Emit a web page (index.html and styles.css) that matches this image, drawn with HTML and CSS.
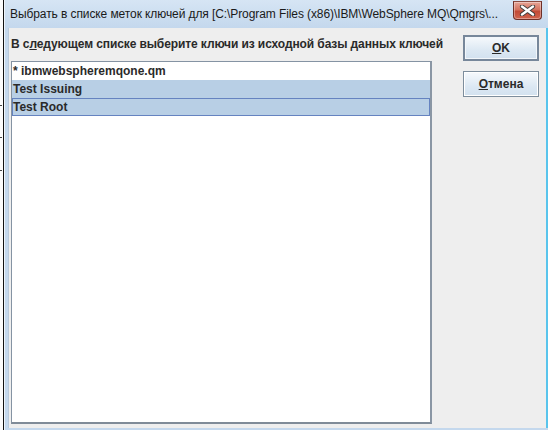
FILE: index.html
```html
<!DOCTYPE html>
<html>
<head>
<meta charset="utf-8">
<link rel="stylesheet" href="styles.css">
</head>
<body>
<div class="backdrop">
  <span class="mark m1"></span>
  <span class="mark m2"></span>
  <span class="mark m3"></span>
</div>
<div class="window">
  <div class="titlebar">
    <span class="title">Выбрать в списке меток ключей для [C:\Program Files (x86)\IBM\WebSphere MQ\Qmgrs\...</span>
    <div class="close">
      <svg width="17" height="11" viewBox="0 0 17 11">
        <path d="M3 1.5 L14 9.5 M14 1.5 L3 9.5" stroke="#3b3b3b" stroke-width="4.2" stroke-linecap="round"/>
        <path d="M3 1.5 L14 9.5 M14 1.5 L3 9.5" stroke="#ffffff" stroke-width="2.4" stroke-linecap="round"/>
      </svg>
    </div>
  </div>
  <div class="client">
    <div class="main">
      <div class="label">В с<u>л</u>едующем списке выберите ключи из исходной базы данных ключей</div>
      <div class="list">
        <div class="row">* ibmwebspheremqone.qm</div>
        <div class="row sel">Test Issuing</div>
        <div class="row sel focus">Test Root</div>
      </div>
    </div>
    <div class="buttons">
      <div class="btn default"><u>O</u>K</div>
      <div class="btn"><u>О</u>тмена</div>
    </div>
  </div>
</div>
</body>
</html>
```
FILE: styles.css
```css
html, body {
  margin: 0;
  padding: 0;
  width: 548px;
  height: 430px;
  overflow: hidden;
}
body {
  display: flex;
  font-family: "Liberation Sans", Arial, sans-serif;
  background: #ffffff;
}
.backdrop {
  position: relative;
  width: 3px;
  height: 430px;
  background: #fbfbfb;
  border-right: 1px solid #111;
  flex: none;
}
.mark {
  position: absolute;
  left: 0;
  width: 2px;
  height: 1px;
  background: #444;
}
.m1 { top: 105px; }
.m2 { top: 137px; }
.m3 { top: 170px; }
.window {
  flex: 1;
  display: flex;
  flex-direction: column;
  background: #c4d8ed;
  border-left: 1px solid #eef4fa;
  padding: 0 0 2px 3px;
}
.titlebar {
  height: 28px;
  display: flex;
  align-items: flex-start;
  background: linear-gradient(#d6e5f4, #c4d8ed);
  margin-left: -3px;
  padding-left: 5px;
}
.title {
  font-size: 12px;
  line-height: 14px;
  margin-top: 7px;
  color: #1a1a1a;
  white-space: nowrap;
  letter-spacing: -0.09px;
  flex: 1;
}
.close {
  width: 27px;
  height: 17px;
  margin: 1px 6px 0 0;
  border: 1px solid #6e3028;
  border-top-color: #8a4a40;
  border-radius: 0 0 4px 4px;
  background: linear-gradient(#e6a597 0%, #d4735f 45%, #c24a36 55%, #d0644e 100%);
  display: flex;
  align-items: center;
  justify-content: center;
  box-shadow: inset 0 0 0 1px rgba(255,255,255,0.35);
}
.close svg { display: block; }
.client {
  flex: 1;
  display: flex;
  background: #eeeeee;
  padding: 0 6px 4px 3px;
  border-right: 2px solid #58c4ec;
  box-shadow: inset 1px 0 0 #b9c9da;
}
.main {
  width: 421px;
  display: flex;
  flex-direction: column;
}
.label {
  font-size: 12px;
  font-weight: bold;
  line-height: 16px;
  margin-top: 8px;
  color: #2a2a2a;
  white-space: nowrap;
  letter-spacing: -0.1px;
}
.label u { text-decoration-thickness: 1px; }
.list {
  margin-top: 9px;
  flex: 1;
  background: #ffffff;
  border: 1px solid #8593a3;
  border-bottom: 2px solid #7f8b98;
  border-right: 2px solid #8a96a4;
}
.row {
  height: 18px;
  line-height: 19px;
  font-size: 12px;
  font-weight: bold;
  color: #2a2a2a;
  padding-left: 1px;
  white-space: nowrap;
  box-sizing: border-box;
}
.row.sel {
  background: #b8cfe5;
}
.row.focus {
  border: 1px solid #6583c0;
  padding-left: 0;
  line-height: 17px;
}
.buttons {
  margin-left: 31px;
  padding-top: 7px;
  display: flex;
  flex-direction: column;
  gap: 10px;
}
.btn {
  width: 76px;
  height: 26px;
  box-sizing: border-box;
  border: 1px solid #7d8d9c;
  background: linear-gradient(#f6f9fc, #dce8f3 60%, #d2e1ef);
  font-size: 12px;
  font-weight: bold;
  color: #2a2a2a;
  display: flex;
  align-items: center;
  justify-content: center;
  box-shadow: inset 0 0 0 1px #ffffff;
}
.btn.default {
  border: 2px solid #77879a;
  box-shadow: inset 0 0 0 1px #f2f6fa;
}
.btn u { text-decoration-thickness: 1px; }
```
